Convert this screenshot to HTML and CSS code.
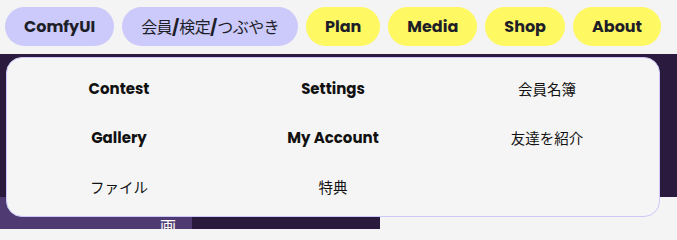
FILE: index.html
```html
<!DOCTYPE html>
<html lang="ja">
<head>
<meta charset="utf-8">
<title>ComfyUI</title>
<link rel="stylesheet" href="styles.css">
</head>
<body>
<header class="nav">
  <a class="pill pill-lav">ComfyUI</a>
  <a class="pill pill-lav"><span class="jp">会員</span>/<span class="jp">検定</span>/<span class="jp">つぶやき</span></a>
  <a class="pill pill-yel">Plan</a>
  <a class="pill pill-yel">Media</a>
  <a class="pill pill-yel">Shop</a>
  <a class="pill pill-yel">About</a>
</header>
<main class="page">
  <section class="hero"></section>
  <section class="lower">
    <div class="side"><span class="side-title">画像</span></div>
    <div class="dark-block"></div>
    <div class="light-block"></div>
  </section>
  <nav class="menu">
    <a class="item">Contest</a>
    <a class="item">Settings</a>
    <a class="item jp">会員名簿</a>
    <a class="item">Gallery</a>
    <a class="item">My Account</a>
    <a class="item jp">友達を紹介</a>
    <a class="item jp">ファイル</a>
    <a class="item jp">特典</a>
  </nav>
</main>
</body>
</html>
```
FILE: styles.css
```css
html, body {
  margin: 0;
  padding: 0;
  height: 229px;
  overflow: hidden;
}
body {
  background: #f4f4f4;
  font-family: "Poppins", "Open Sans", "Noto Sans CJK JP", sans-serif;
  color: #161616;
}
.nav {
  display: flex;
  gap: 8px;
  padding: 7px 5px 8px;
  height: 39px;
}
.pill {
  display: block;
  height: 39px;
  line-height: 39px;
  padding: 0 19px;
  border-radius: 20px;
  font-size: 16px;
  font-weight: 700;
  color: #1e1e28;
  white-space: nowrap;
}
.pill-lav { background: #cbcafa; }
.pill-yel { background: #fef862; }
.jp {
  font-family: "Noto Sans CJK JP", sans-serif;
  font-weight: 400;
}
.pill .jp {
  font-size: 16px;
  letter-spacing: -0.6px;
}
.page {
  position: relative;
}
.hero {
  height: 143px;
  background: #2a1a3e;
}
.lower {
  display: flex;
  height: 32px;
}
.side {
  width: 192px;
  background: #4f3b72;
  display: flex;
  justify-content: flex-end;
  padding-right: 16px;
  box-sizing: border-box;
  overflow: hidden;
}
.side-title {
  color: #ffffff;
  font-family: "Noto Sans CJK JP", sans-serif;
  font-size: 16px;
  line-height: 16px;
  margin-top: 21px;
  width: 16px;
  height: 11px;
  overflow: hidden;
}
.dark-block {
  width: 188px;
  background: #2a1a3e;
}
.light-block {
  flex: 1;
  background: #f4f4f4;
}
.menu {
  position: absolute;
  top: 3px;
  left: 6px;
  display: grid;
  grid-template-columns: repeat(3, 1fr);
  grid-auto-rows: 49px;
  padding: 6px 5px 5px;
  width: 642px;
  background: #f5f5f5;
  border: 1px solid #cdc8fa;
  border-radius: 16px;
}
.item {
  display: flex;
  align-items: center;
  justify-content: center;
  font-size: 15px;
  font-weight: 700;
  color: #111111;
}
.item.jp {
  font-weight: 400;
  font-size: 14.5px;
}
```
